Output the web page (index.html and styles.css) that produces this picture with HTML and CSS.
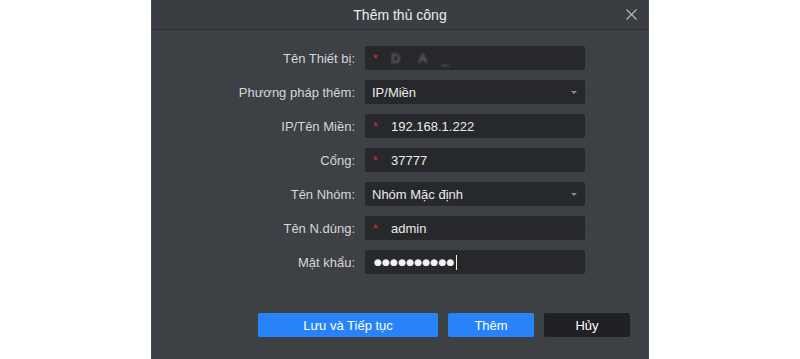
FILE: index.html
```html
<!DOCTYPE html>
<html lang="vi">
<head>
<meta charset="utf-8">
<title>Thêm thủ công</title>
<link rel="stylesheet" href="styles.css">
</head>
<body>
<div class="dialog">
  <div class="titlebar">
    <span class="title">Thêm thủ công</span>
    <span class="close">
      <svg width="11" height="11" viewBox="0 0 11 11"><path d="M0.5 0.5 L10.5 10.5 M10.5 0.5 L0.5 10.5" stroke="#b8babd" stroke-width="1.1" fill="none"/></svg>
    </span>
  </div>
  <div class="content">
    <div class="form">
      <label class="label">Tên Thiết bị:</label>
      <div class="field"><span class="req">*</span><span class="blurred">D&nbsp;&nbsp;&nbsp;&nbsp;&nbsp;A&nbsp;&nbsp;&nbsp;&nbsp;_</span></div>

      <label class="label">Phương pháp thêm:</label>
      <div class="field select"><span class="value">IP/Miền</span><span class="arrow"></span></div>

      <label class="label">IP/Tên Miền:</label>
      <div class="field"><span class="req">*</span><span class="value">192.168.1.222</span></div>

      <label class="label">Cổng:</label>
      <div class="field"><span class="req">*</span><span class="value">37777</span></div>

      <label class="label">Tên Nhóm:</label>
      <div class="field select"><span class="value">Nhóm Mặc định</span><span class="arrow"></span></div>

      <label class="label">Tên N.dùng:</label>
      <div class="field"><span class="req">*</span><span class="value">admin</span></div>

      <label class="label">Mật khẩu:</label>
      <div class="field password"><span class="dots">●●●●●●●●●●</span><span class="caret"></span></div>
    </div>
    <div class="actions">
      <button class="btn primary wide">Lưu và Tiếp tục</button>
      <button class="btn primary">Thêm</button>
      <button class="btn dark">Hủy</button>
    </div>
  </div>
</div>
</body>
</html>
```

FILE: styles.css
```css
* { box-sizing: border-box; }
html, body {
  margin: 0;
  padding: 0;
  background: #ffffff;
  height: 359px;
  overflow: hidden;
}
body {
  display: flex;
  justify-content: center;
  font-family: "Liberation Sans", Arial, sans-serif;
}
.dialog {
  width: 498px;
  height: 359px;
  background: #3d4045;
  border-left: 1px solid #45484d;
  border-right: 1px solid #45484d;
  display: flex;
  flex-direction: column;
}
.titlebar {
  height: 30px;
  flex: none;
  background: #3a3d42;
  border-bottom: 1px solid #2a2c30;
  display: flex;
  align-items: center;
  justify-content: center;
  position: relative;
}
.title {
  color: #ececec;
  font-size: 14px;
  padding-top: 1px;
}
.close {
  position: absolute;
  right: 11px;
  top: 9px;
  width: 11px;
  height: 11px;
  display: flex;
}
.content {
  padding: 16px 18px 0 0;
  display: flex;
  flex-direction: column;
}
.form {
  display: grid;
  grid-template-columns: 203px 220px;
  grid-auto-rows: 24px;
  column-gap: 10px;
  row-gap: 10px;
}
.label {
  color: #d6d7d9;
  font-size: 13px;
  text-align: right;
  align-self: center;
  white-space: nowrap;
}
.field {
  background: #26282c;
  border-radius: 2px;
  display: flex;
  align-items: center;
  padding-left: 8px;
  color: #ebebeb;
  font-size: 13px;
  position: relative;
}
.req {
  color: #e0282e;
  font-size: 12px;
  width: 18px;
  flex: none;
  padding-top: 1px;
}
.blurred {
  color: #7a7c80;
  filter: blur(1px);
  font-size: 13px;
}
.select {
  padding-left: 7px;
}
.arrow {
  position: absolute;
  right: 8px;
  top: 11px;
  width: 0;
  height: 0;
  border-left: 3px solid transparent;
  border-right: 3px solid transparent;
  border-top: 3px solid #8a8c90;
}
.password {
  padding-left: 9px;
}
.dots {
  font-size: 9px;
  letter-spacing: 0.2px;
  color: #f2f2f2;
  font-family: "DejaVu Sans", sans-serif;
}
.caret {
  width: 1px;
  height: 15px;
  background: #f0f0f0;
  margin-left: 1px;
}
.actions {
  margin-top: 39px;
  display: flex;
  justify-content: flex-end;
  gap: 10px;
}
.btn {
  height: 24px;
  width: 86px;
  border: none;
  border-radius: 2px;
  color: #ffffff;
  font-family: "Liberation Sans", Arial, sans-serif;
  font-size: 13px;
  padding: 0;
}
.btn.wide { width: 180px; }
.primary { background: #2883fb; }
.dark { background: #1f2125; }
```
